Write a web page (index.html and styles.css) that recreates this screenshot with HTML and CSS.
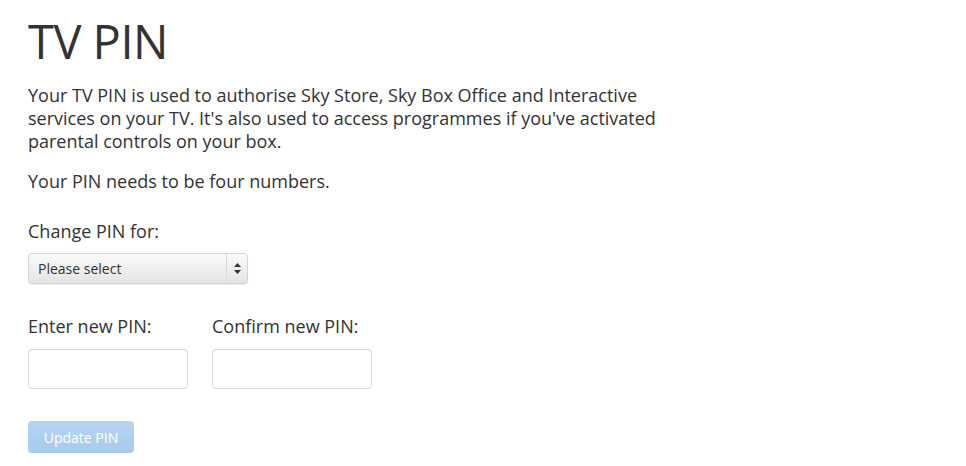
FILE: index.html
```html
<!DOCTYPE html>
<html>
<head>
    <meta charset="UTF-8">
    <title>TV PIN</title>
    <link rel="stylesheet" href="styles.css">
</head>
<body>
    <div id="pinPage">
        <h1 class="title">TV PIN</h1>
        <p class="intro">Your TV PIN is used to authorise Sky Store, Sky Box Office and Interactive services on your TV. It's also used to access programmes if you've activated parental controls on your box.</p>
        <p class="intro">Your PIN needs to be four numbers.</p>

        <label class="field-label" for="pinFor">Change PIN for:</label>
        <div class="select-box" id="pinFor">
            <span class="select-text">Please select</span>
            <span class="select-arrows">
                <svg width="7" height="11" viewBox="0 0 7 11"><path d="M3.5 0 L7 4 L0 4 Z M0 7 L7 7 L3.5 11 Z" fill="#333"/></svg>
            </span>
        </div>

        <div class="pin-row">
            <div class="pin-field">
                <label class="field-label" for="newPin">Enter new PIN:</label>
                <input type="password" id="newPin" class="pin-input">
            </div>
            <div class="pin-field">
                <label class="field-label" for="confirmPin">Confirm new PIN:</label>
                <input type="password" id="confirmPin" class="pin-input">
            </div>
        </div>

        <button class="update-btn" disabled>Update PIN</button>
    </div>
</body>
</html>
```
FILE: styles.css
```css
body {
    margin: 0;
    background-color: #fff;
    color: #333;
    font-family: "Open Sans", Arial, sans-serif;
}

#pinPage {
    padding: 0 28px;
    width: 640px;
}

.title {
    font-size: 47px;
    font-weight: 400;
    line-height: 60px;
    margin: 11px 0 13px;
    letter-spacing: -0.5px;
}

.intro {
    font-size: 18px;
    line-height: 23px;
    margin: 0 0 17px;
}

.field-label {
    display: block;
    font-size: 18px;
    line-height: 23px;
    margin-top: 27px;
}

.select-box {
    display: flex;
    width: 220px;
    height: 31px;
    margin-top: 10px;
    box-sizing: border-box;
    border: 1px solid #d4d4d4;
    border-radius: 4px;
    background: linear-gradient(#fafafa, #e4e4e4);
    box-shadow: 0 1px 1px rgba(0,0,0,0.08);
    font-size: 14px;
    color: #333;
}

.select-text {
    flex: 1;
    padding-left: 9px;
    line-height: 29px;
}

.select-arrows {
    width: 20px;
    border-left: 1px solid #d8d8d8;
    display: flex;
    align-items: center;
    justify-content: center;
}

.pin-row {
    display: flex;
    gap: 24px;
    margin-top: 9px;
}

.pin-field .field-label {
    margin-top: 22px;
}

.pin-input {
    display: block;
    width: 160px;
    height: 40px;
    margin-top: 11px;
    box-sizing: border-box;
    border: 1px solid #d6d6d6;
    border-radius: 4px;
    background: #fff;
}

.update-btn {
    display: block;
    margin-top: 32px;
    width: 106px;
    height: 32px;
    border: none;
    border-radius: 4px;
    background: linear-gradient(#b6d5f1, #a6cbec);
    color: #fff;
    font-family: "Open Sans", Arial, sans-serif;
    font-size: 14px;
    padding: 0;
}
```
